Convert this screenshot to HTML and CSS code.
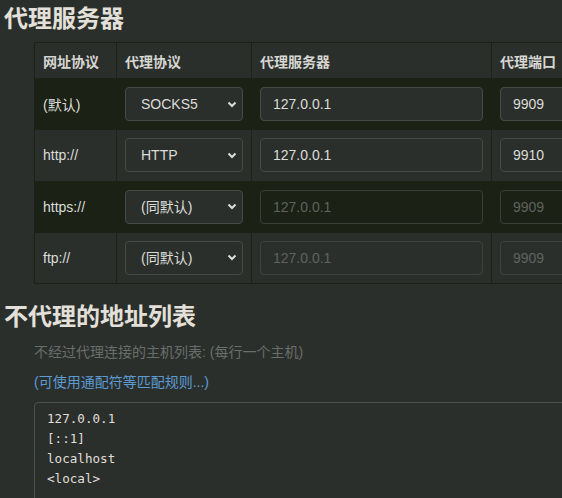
FILE: index.html
```html
<!DOCTYPE html>
<html lang="zh">
<head>
<meta charset="utf-8">
<link rel="stylesheet" href="styles.css">
</head>
<body>
<h2 class="title">代理服务器</h2>
<div class="indent">
<table class="proxy">
  <thead>
    <tr><th class="c1">网址协议</th><th class="c2">代理协议</th><th class="c3">代理服务器</th><th class="c4">代理端口</th></tr>
  </thead>
  <tbody>
    <tr class="odd">
      <td>(默认)</td>
      <td><select class="sel"><option>SOCKS5</option></select></td>
      <td><input class="host" value="127.0.0.1"></td>
      <td><input class="port" value="9909"></td>
    </tr>
    <tr>
      <td>http://</td>
      <td><select class="sel"><option>HTTP</option></select></td>
      <td><input class="host" value="127.0.0.1"></td>
      <td><input class="port" value="9910"></td>
    </tr>
    <tr class="odd">
      <td>https://</td>
      <td><select class="sel"><option>(同默认)</option></select></td>
      <td><input class="host" placeholder="127.0.0.1"></td>
      <td><input class="port" placeholder="9909"></td>
    </tr>
    <tr>
      <td>ftp://</td>
      <td><select class="sel"><option>(同默认)</option></select></td>
      <td><input class="host" placeholder="127.0.0.1"></td>
      <td><input class="port" placeholder="9909"></td>
    </tr>
  </tbody>
</table>
</div>
<h2 class="title title2">不代理的地址列表</h2>
<div class="indent">
  <p class="desc">不经过代理连接的主机列表: (每行一个主机)</p>
  <p class="link">(可使用通配符等匹配规则...)</p>
  <textarea class="bypass">127.0.0.1
[::1]
localhost
&lt;local&gt;</textarea>
</div>
</body>
</html>
```
FILE: styles.css
```css
html, body {
  margin: 0;
  padding: 0;
  background: #2b2f2c;
  overflow: hidden;
}
body {
  font-family: "Liberation Sans", "Noto Sans CJK SC", sans-serif;
  font-size: 14px;
  color: #dcdcd8;
  width: 562px;
  height: 498px;
}
.title {
  margin: 0;
  padding: 4px 0 0 4px;
  height: 38px;
  box-sizing: border-box;
  font-size: 24px;
  font-weight: bold;
  color: #e3e0d9;
  line-height: 30px;
}
.title2 {
  margin-top: 18px;
  height: 40px;
  padding-top: 0;
}
.indent {
  padding-left: 34px;
}
.proxy {
  border-collapse: collapse;
  border: 1px solid #1d2219;
  margin-top: 4px;
  table-layout: fixed;
  width: 600px;
}
.proxy th, .proxy td {
  border: 1px solid #1d2219;
  text-align: left;
  padding: 0 8px;
  font-size: 14px;
}
.proxy th {
  height: 35px;
  font-weight: bold;
  color: #d6d6d2;
}
.proxy td {
  height: 50.25px;
}
.c1 { width: 65px; }
.c2 { width: 118px; }
.c3 { width: 223px; }
.c4 { width: 125px; }
.odd td { background: #1b2115; }
.sel, .host, .port {
  box-sizing: border-box;
  height: 34px;
  border: 1px solid #464b47;
  border-radius: 4px;
  background: #2b2f2c;
  color: #dcdcd8;
  font-family: "Liberation Sans", "Noto Sans CJK SC", sans-serif;
  font-size: 14px;
  display: block;
  margin: 0;
}
.sel {
  width: 118px;
  padding: 0 0 0 15px;
  appearance: none;
  -webkit-appearance: none;
  background-image: url("data:image/svg+xml,%3Csvg xmlns='http://www.w3.org/2000/svg' width='10' height='7' viewBox='0 0 10 7'%3E%3Cpath d='M1.5 1.5 L5 5 L8.5 1.5' fill='none' stroke='%23dcdcd8' stroke-width='2'/%3E%3C/svg%3E");
  background-repeat: no-repeat;
  background-position: right 5px center;
}
.host {
  width: 223px;
  padding: 0 12px;
}
.port {
  width: 100px;
  padding: 0 12px;
}
.host::placeholder, .port::placeholder {
  color: #5d635e;
}
.odd .host:placeholder-shown, .odd .port:placeholder-shown {
  background: #1b2115;
  border-color: #3a3f37;
}
tr:not(.odd) .host:placeholder-shown, tr:not(.odd) .port:placeholder-shown {
  border-color: #3d423e;
}
.desc {
  margin: 0;
  font-size: 14px;
  color: #686e6a;
  line-height: 20px;
}
.link {
  margin: 10px 0 0 0;
  font-size: 14px;
  color: #5b9ad2;
  line-height: 20px;
}
.bypass {
  display: block;
  margin-top: 10px;
  box-sizing: border-box;
  width: 560px;
  height: 120px;
  background: #2b2f2c;
  border: 1px solid #4c504d;
  border-radius: 4px;
  color: #e0ded8;
  font-family: "DejaVu Sans Mono", monospace;
  font-size: 12.6px;
  line-height: 20px;
  padding: 6px 12px;
  resize: none;
}
```
